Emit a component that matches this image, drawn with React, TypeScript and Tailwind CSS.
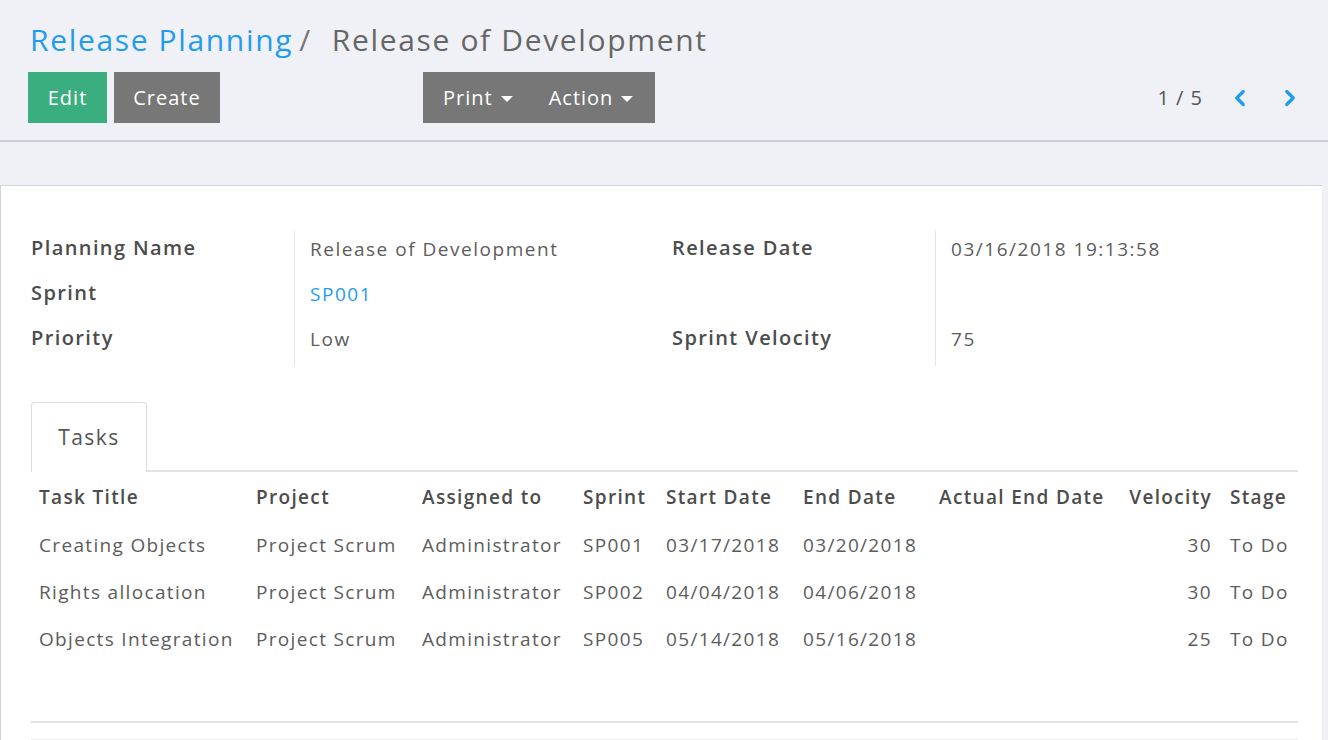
import { ChevronLeft, ChevronRight } from "lucide-react"

const tasks = [
  { title: "Creating Objects", project: "Project Scrum", user: "Administrator", sprint: "SP001", start: "03/17/2018", end: "03/20/2018", velocity: 30, stage: "To Do" },
  { title: "Rights allocation", project: "Project Scrum", user: "Administrator", sprint: "SP002", start: "04/04/2018", end: "04/06/2018", velocity: 30, stage: "To Do" },
  { title: "Objects Integration", project: "Project Scrum", user: "Administrator", sprint: "SP005", start: "05/14/2018", end: "05/16/2018", velocity: 25, stage: "To Do" },
]

const cols = "grid grid-cols-[217px_166px_161px_83px_137px_136px_182px_109px_77px]"

function Caret() {
  return <span className="ml-2 inline-block h-0 w-0 border-x-[6px] border-t-[6px] border-x-transparent border-t-white align-middle" />
}

function Field({ label, children }: { label: string; children: React.ReactNode }) {
  return (
    <div className="flex h-[45px]">
      <div className="w-[263px] pt-[2px] text-[20px] font-semibold tracking-[0.07em] text-[#4c4c4c]">{label}</div>
      <div className="border-l border-[#e4e4e4] pl-[15px] pt-[4px] text-[19px] tracking-[0.08em] text-[#5c5c5c]">{children}</div>
    </div>
  )
}

export default function App() {
  return (
    <div className="h-[740px] w-[1328px] overflow-hidden bg-[#f0f1f6] font-['Open_Sans',sans-serif]">
      <header className="h-[142px] border-b-2 border-[#c8cdd8] px-[28px] pt-[18px]">
        <div className="flex items-baseline text-[30px] leading-[44px] tracking-[0.055em]">
          <span className="ml-[2px] text-[#1f9bf0]">Release Planning</span>
          <span className="ml-[6px] text-[#777]">/</span>
          <span className="ml-[20px] text-[#666]">Release of Development</span>
        </div>
        <div className="mt-[10px] flex items-center text-[20px] tracking-[0.05em] text-white">
          <button className="h-[51px] w-[79px] bg-[#3bae7f]">Edit</button>
          <button className="ml-[7px] h-[51px] w-[106px] bg-[#777]">Create</button>
          <div className="ml-[203px] flex h-[51px] w-[232px] items-center bg-[#777] pl-[20px]">
            <span>Print<Caret /></span>
            <span className="ml-[36px]">Action<Caret /></span>
          </div>
          <div className="ml-auto flex items-center text-[#555]">
            <span>1 / 5</span>
            <ChevronLeft className="ml-[24px] text-[#1f9bf0]" size={26} strokeWidth={3} />
            <ChevronRight className="ml-[24px] mr-[-3px] text-[#1f9bf0]" size={26} strokeWidth={3} />
          </div>
        </div>
      </header>

      <main className="mr-[6px] mt-[43px] h-[560px] border-l border-t border-[#cfd2da] bg-white pl-[30px] pr-[24px] pt-[45px]">
        <div className="flex">
          <div className="w-[641px]">
            <Field label="Planning Name">Release of Development</Field>
            <Field label="Sprint"><span className="text-[#1f9bf0]">SP001</span></Field>
            <Field label="Priority">Low</Field>
          </div>
          <div>
            <Field label="Release Date">03/16/2018 19:13:58</Field>
            <Field label="">&nbsp;</Field>
            <Field label="Sprint Velocity">75</Field>
          </div>
        </div>

        <div className="mt-[36px] flex h-[70px] items-end border-b-2 border-[#e2e2e2]">
          <div className="-mb-[2px] flex h-[70px] w-[116px] items-center justify-center rounded-t-[4px] border-x border-t border-[#dcdcdc] bg-white text-[21px] tracking-[0.07em] text-[#555]">
            Tasks
          </div>
        </div>

        <div className="text-[19px] tracking-[0.07em]">
          <div className={`${cols} h-[50px] items-center font-semibold text-[#4c4c4c]`}>
            <div className="px-2">Task Title</div>
            <div className="px-2">Project</div>
            <div className="px-2">Assigned to</div>
            <div className="px-2">Sprint</div>
            <div className="px-2">Start Date</div>
            <div className="px-2">End Date</div>
            <div className="px-2">Actual End Date</div>
            <div className="pr-[10px] text-right">Velocity</div>
            <div className="px-2">Stage</div>
          </div>
          {tasks.map((t) => (
            <div key={t.title} className={`${cols} h-[47px] items-center text-[#5c5c5c]`}>
              <div className="px-2">{t.title}</div>
              <div className="px-2">{t.project}</div>
              <div className="px-2">{t.user}</div>
              <div className="px-2">{t.sprint}</div>
              <div className="px-2">{t.start}</div>
              <div className="px-2">{t.end}</div>
              <div className="px-2"></div>
              <div className="pr-[10px] text-right">{t.velocity}</div>
              <div className="px-2">{t.stage}</div>
            </div>
          ))}
          <div className="mt-[58px] border-t-2 border-[#e2e2e2]" />
          <div className="mt-[16px] border-t border-[#ececec]" />
        </div>
      </main>
    </div>
  )
}
